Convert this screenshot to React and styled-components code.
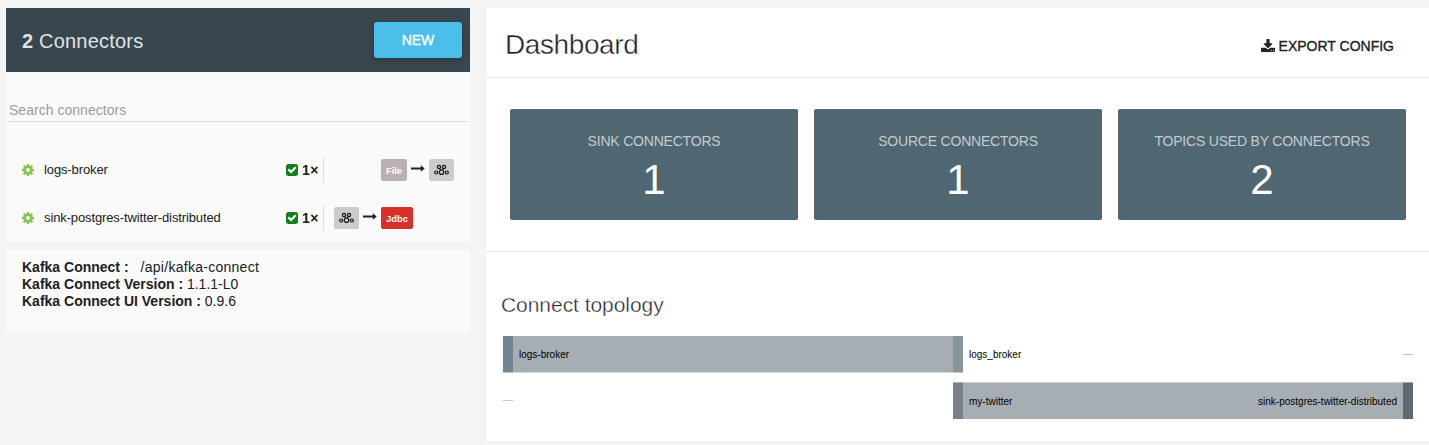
import React from "react";
import styled, { createGlobalStyle } from "styled-components";

const GlobalStyle = createGlobalStyle`
  * { box-sizing: border-box; }
  body {
    margin: 0;
    background: #f4f4f4;
    color: #212121;
    font-family: "Liberation Sans", Arial, sans-serif;
    font-size: 14px;
    overflow: hidden;
  }
`;

const Page = styled.div`
  display: flex;
  gap: 16px;
  height: 445px;
  padding: 8px 0 4px 6px;
`;

const Sidebar = styled.aside`
  display: flex;
  flex-direction: column;
  gap: 8px;
  width: 464px;
  flex: none;
`;

const Panel = styled.section`
  background: #fafafa;
  height: ${(p) => p.$height}px;
`;

const SidebarHeader = styled.header`
  display: flex;
  align-items: center;
  justify-content: space-between;
  height: 64px;
  padding: 0 8px 0 16px;
  background: #38474f;
`;

const SidebarTitle = styled.h2`
  margin: 0;
  font-size: 20px;
  font-weight: 400;
  letter-spacing: 0.2px;
  line-height: 24px;
  padding-top: 2px;
  color: #e1e4e5;
`;

const NewButton = styled.button`
  width: 88px;
  height: 36px;
  padding: 0;
  border: 0;
  border-radius: 3px;
  background: #4bbeea;
  color: #fff;
  font: 14px "Liberation Sans", Arial, sans-serif;
  -webkit-text-stroke: 0.35px #fff;
  box-shadow: 0 2px 5px rgba(0, 0, 0, 0.26);
`;

const Search = styled.input`
  display: block;
  width: 460px;
  height: 26px;
  margin: 24px 2px 0;
  padding: 3px 1px 0;
  border: 0;
  border-bottom: 1px solid #dcdcdc;
  background: transparent;
  font: 14px "Liberation Sans", Arial, sans-serif;
  letter-spacing: 0.03px;
  &::placeholder { color: #9c9c9c; }
`;

const ConnectorList = styled.div`
  padding-top: 24px;
`;

const ConnectorRow = styled.div`
  display: grid;
  grid-template-columns: 22px 242px 38px 1fr;
  align-items: center;
  height: 48px;
  padding: 0 16px;
`;

const ConnectorName = styled.span`
  padding-bottom: 2px;
  font-size: 13px;
  letter-spacing: -0.12px;
`;

const Tasks = styled.div`
  display: flex;
  align-items: center;
  gap: 4px;
  height: 26px;
  border-right: 1px solid #dcdcdc;
  font-weight: 700;
  letter-spacing: 0.5px;
`;

const Flow = styled.div`
  display: flex;
  align-items: center;
  gap: 4px;
  padding-left: ${(p) => (p.$offset ? 57 : 10)}px;
`;

const Tag = styled.span`
  display: inline-flex;
  align-items: center;
  justify-content: center;
  width: ${(p) => p.$width}px;
  height: 22px;
  border-radius: 2px;
  background: ${(p) => p.$color};
  color: #fff;
  font-size: 9.4px;
  font-weight: 700;
`;

const Icon = styled.svg`
  display: block;
  flex: none;
  fill: currentColor;
  color: ${(p) => p.$color || "#212121"};
`;

const Arrow = styled(Icon)`
  margin-bottom: 3px;
`;

const Info = styled.div`
  padding: 9px 16px;
  line-height: 17px;
`;

const Endpoint = styled.span`
  margin-left: 12px;
  letter-spacing: 0.27px;
`;

const Main = styled.main`
  flex: 1;
  background: #fff;
`;

const MainHeader = styled.header`
  display: flex;
  align-items: center;
  justify-content: space-between;
  height: 70px;
  padding: 4px 36px 0 19px;
  border-bottom: 1px solid #e6e6e6;
`;

const Heading = styled.h1`
  margin: 0;
  font-size: ${(p) => p.$size}px;
  font-weight: 400;
  letter-spacing: ${(p) => p.$spacing}px;
  line-height: 32px;
  -webkit-text-stroke: 0.4px #fff;
`;

const ExportButton = styled.div`
  display: flex;
  align-items: center;
  gap: 4px;
  padding-top: 3px;
  -webkit-text-stroke: 0.35px #212121;
`;

const DownloadIcon = styled(Icon)`
  margin: 0 0 2px;
  stroke: none;
`;

const Stats = styled.div`
  display: grid;
  grid-template-columns: repeat(3, 288px);
  gap: 16px;
  height: 174px;
  padding: 31px 24px;
  border-bottom: 1px solid #e6e6e6;
`;

const StatCard = styled.div`
  display: flex;
  flex-direction: column;
  align-items: center;
  height: 111px;
  padding-top: 24px;
  border-radius: 2px;
  background: #506670;
`;

const StatLabel = styled.span`
  line-height: 16px;
  letter-spacing: -0.2px;
  color: #c5ccd0;
`;

const StatValue = styled.span`
  font-size: 42px;
  line-height: 48px;
  margin-top: 7px;
  color: #fff;
`;

const Topology = styled.section`
  padding: 37px 16px 0 15px;
`;

const Chart = styled.svg`
  display: block;
  margin: 15px 0 0 2px;
  font-size: 10px;
  fill: #000;
`;

const COG =
  "M1024 768q0-106-75-181t-181-75-181 75-75 181 75 181 181 75 181-75 75-181zm512-109v222q0 12-8 23t-20 13l-185 28q-19 54-39 91 35 50 107 138 10 12 10 25t-9 23q-27 37-99 108t-94 71q-12 0-26-9l-138-108q-44 23-91 38-16 136-29 186-7 28-36 28h-222q-14 0-24.500-8.500t-11.500-21.500l-28-184q-49-16-90-37l-141 107q-10 9-25 9-14 0-25-11-126-114-165-168-7-10-7-23 0-12 8-23 15-21 51-66.500t54-70.500q-27-50-41-99l-183-27q-13-2-21-12.500t-8-23.500v-222q0-12 8-23t19-13l186-28q14-46 39-92-40-57-107-138-10-12-10-24 0-10 9-23 26-36 98.500-107.500t94.500-71.500q13 0 26 10l138 107q44-23 91-38 16-136 29-186 7-28 36-28h222q14 0 24.500 8.500t11.500 21.500l28 184q49 16 90 37l142-107q9-9 24-9 13 0 25 10 129 119 165 170 7 8 7 22 0 12-8 23-15 21-51 66.500t-54 70.500q26 50 41 98l183 28q13 2 21 12.500t8 23.500z";
const CHECK =
  "M685 1171l614-614q19-19 19-45t-19-45l-102-102q-19-19-45-19t-45 19l-467 467-211-211q-19-19-45-19t-45 19l-102 102q-19 19-19 45t19 45l358 358q19 19 45 19t45-19zm851-883v960q0 119-84.500 203.500t-203.500 84.500h-960q-119 0-203.500-84.500t-84.500-203.500v-960q0-119 84.500-203.500t203.500-84.500h960q119 0 203.500 84.500t84.500 203.500z";
const DOWNLOAD =
  "M1280 1344q0-26-19-45t-45-19-45 19-19 45 19 45 45 19 45-19 19-45zm256 0q0-26-19-45t-45-19-45 19-19 45 19 45 45 19 45-19 19-45zm128-224v320q0 40-28 68t-68 28h-1472q-40 0-68-28t-28-68v-320q0-40 28-68t68-28h465l135 136q58 56 136 56t136-56l136-136h464q40 0 68 28t28 68zm-325-569q17 41-14 70l-448 448q-18 19-45 19t-45-19l-448-448q-31-29-14-70 17-39 59-39h256v-448q0-26 19-45t45-19h256q26 0 45 19t19 45v448h256q42 0 59 39z";

const TopicTag = () => (
  <Tag $width={25} $color="#cccccc">
    <Icon width="15" height="12" viewBox="0 0 15 12">
      <g fill="none" stroke="#161616" strokeWidth="1.2">
        <circle cx="5" cy="3" r="1.6" />
        <circle cx="10" cy="3" r="1.6" />
        <circle cx="2.200" cy="8.500" r="1.500" />
        <circle cx="7.500" cy="8.200" r="2.200" />
        <circle cx="12.800" cy="8.500" r="1.500" />
        <path d="M5.800 4.400l.7 1.900M9.200 4.400l-.7 1.900" />
      </g>
    </Icon>
  </Tag>
);

const FlowArrow = () => (
  <Arrow width="14" height="7" viewBox="0 0 14 7">
    <path d="M0 2.500h9.800V.3L13.700 3.500 9.800 6.700V4.500H0z" />
  </Arrow>
);

const Connector = ({ name, offset, children }) => (
  <ConnectorRow>
    <Icon width="12" height="12" viewBox="0 0 1536 1536" $color="#8bc34a">
      <path d={COG} />
    </Icon>
    <ConnectorName>{name}</ConnectorName>
    <Tasks>
      <Icon width="12" height="12" viewBox="0 0 1536 1536" $color="#15801a">
        <path d={CHECK} />
      </Icon>
      <span>1×</span>
    </Tasks>
    <Flow $offset={offset}>{children}</Flow>
  </ConnectorRow>
);

const stats = [
  ["SINK CONNECTORS", 1],
  ["SOURCE CONNECTORS", 1],
  ["TOPICS USED BY CONNECTORS", 2],
];

export default function App() {
  return (
    <Page>
      <GlobalStyle />
      <Sidebar>
        <Panel $height={234}>
          <SidebarHeader>
            <SidebarTitle>
              <b>2</b> Connectors
            </SidebarTitle>
            <NewButton>NEW</NewButton>
          </SidebarHeader>
          <Search placeholder="Search connectors" />
          <ConnectorList>
            <Connector name="logs-broker" offset>
              <Tag $width={26} $color="#bab2b0">File</Tag>
              <FlowArrow />
              <TopicTag />
            </Connector>
            <Connector name="sink-postgres-twitter-distributed">
              <TopicTag />
              <FlowArrow />
              <Tag $width={32} $color="#d6302a">Jdbc</Tag>
            </Connector>
          </ConnectorList>
        </Panel>
        <Panel $height={83}>
          <Info>
            <div><b>Kafka Connect :</b><Endpoint>/api/kafka-connect</Endpoint></div>
            <div><b>Kafka Connect Version :</b> 1.1.1-L0</div>
            <div><b>Kafka Connect UI Version :</b> 0.9.6</div>
          </Info>
        </Panel>
      </Sidebar>
      <Main>
        <MainHeader>
          <Heading $size={28} $spacing={-0.4}>Dashboard</Heading>
          <ExportButton>
            <DownloadIcon width="14" height="13" viewBox="0 0 1664 1536">
              <path d={DOWNLOAD} />
            </DownloadIcon>
            EXPORT CONFIG
          </ExportButton>
        </MainHeader>
        <Stats>
          {stats.map(([label, value]) => (
            <StatCard key={label}>
              <StatLabel>{label}</StatLabel>
              <StatValue>{value}</StatValue>
            </StatCard>
          ))}
        </Stats>
        <Topology>
          <Heading as="h2" $size={21} $spacing={-0.05}>Connect topology</Heading>
          <Chart width="910" height="84" viewBox="0 0 910 84">
            <rect x="10" width="440" height="36.500" fill="#a6aeb4" />
            <rect width="10" height="36.500" fill="#73858c" />
            <rect x="450" width="10" height="36.500" fill="#87959d" />
            <rect x="460" y="46.400" width="440" height="36.600" fill="#a6aeb4" />
            <rect x="450" y="46.400" width="10" height="36.600" fill="#798188" />
            <rect x="900" y="46.400" width="10" height="36.600" fill="#5d6b73" />
            <rect y="64" width="10" height="1" fill="#c4c8c8" />
            <rect x="900" y="18" width="10" height="1" fill="#b9c4c2" />
            <text x="16" y="22">logs-broker</text>
            <text x="466" y="22">logs_broker</text>
            <text x="466" y="68.500">my-twitter</text>
            <text x="894" y="68.500" textAnchor="end">sink-postgres-twitter-distributed</text>
          </Chart>
        </Topology>
      </Main>
    </Page>
  );
}
